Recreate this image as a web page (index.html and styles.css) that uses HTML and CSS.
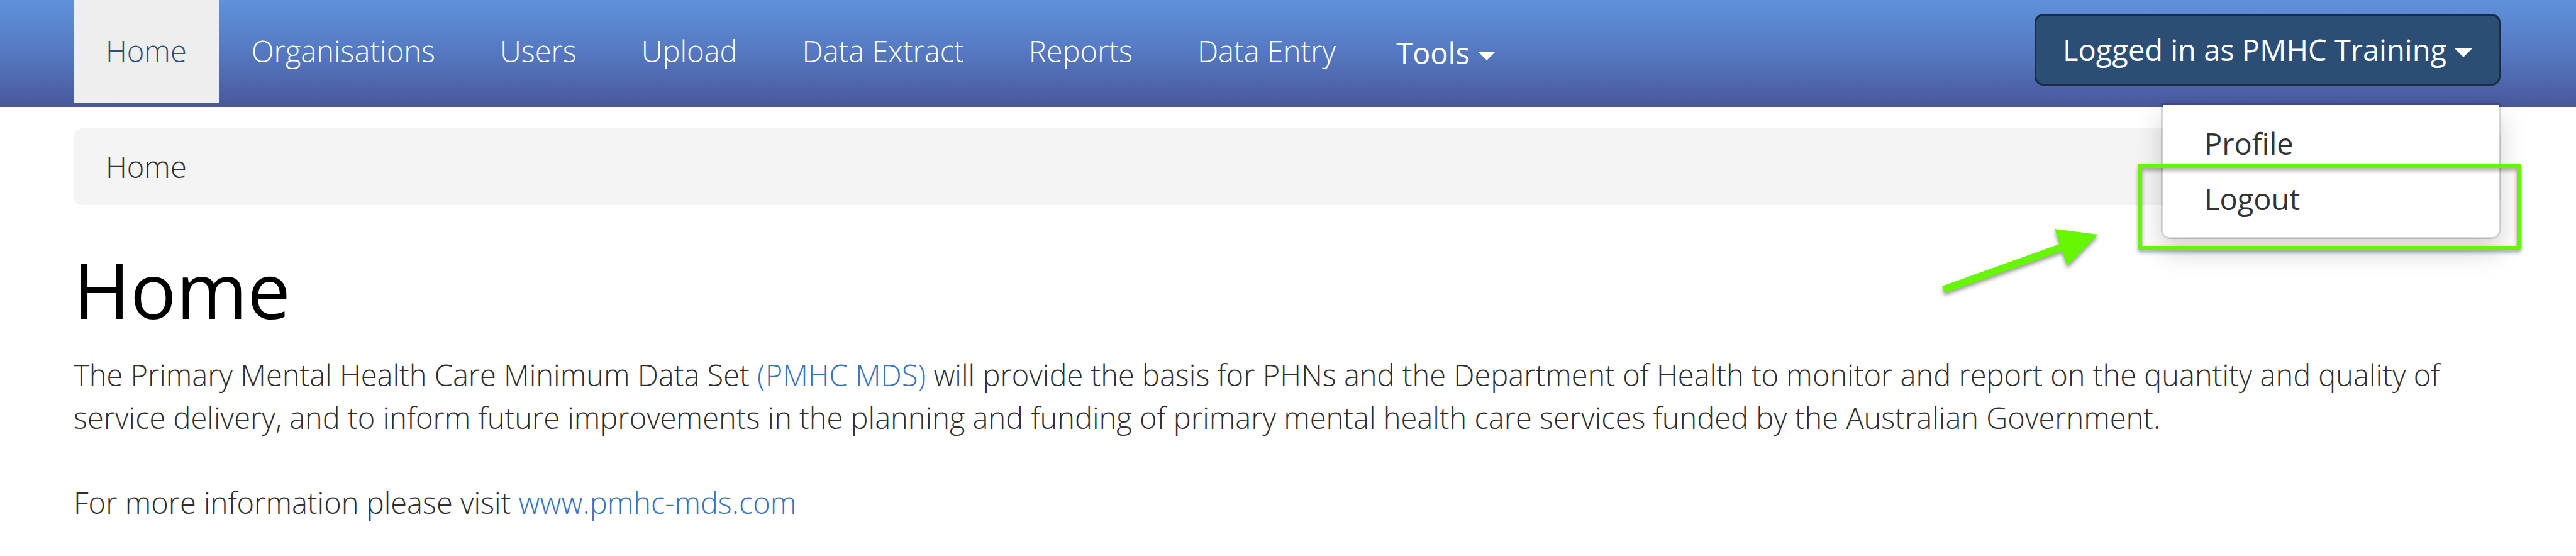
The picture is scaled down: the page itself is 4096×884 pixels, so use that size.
FILE: index.html
```html
<!DOCTYPE html>
<html lang="en">
<head>
<meta charset="utf-8">
<title>Home - PMHC MDS</title>
<link rel="stylesheet" href="styles.css">
</head>
<body>
<header class="navbar">
  <nav class="nav">
    <a class="nav-link active" href="#">Home</a>
    <a class="nav-link" href="#">Organisations</a>
    <a class="nav-link" href="#">Users</a>
    <a class="nav-link" href="#">Upload</a>
    <a class="nav-link" href="#">Data Extract</a>
    <a class="nav-link" href="#">Reports</a>
    <a class="nav-link" href="#">Data Entry</a>
    <button class="tools" type="button">Tools<span class="caret"></span></button>
  </nav>
  <div class="account">
    <button class="account-button" type="button">Logged in as PMHC Training<span class="caret"></span></button>
    <div class="menu">
      <a class="menu-item" href="#">Profile</a>
      <a class="menu-item" href="#">Logout</a>
    </div>
    <div class="highlight"></div>
    <svg class="arrow" width="264" height="124" viewBox="0 0 264 124" aria-hidden="true">
      <path fill="#66f600" d="M8 99 195 32 187 8 256 17 207 67 199 43 12 110Z"/>
    </svg>
  </div>
</header>
<main class="content">
  <ol class="breadcrumb"><li>Home</li></ol>
  <h1 class="title">Home</h1>
  <p class="text">The Primary Mental Health Care Minimum Data Set <a class="link" href="#">(PMHC MDS)</a> will provide the basis for PHNs and the Department of Health to monitor and report on the quantity and quality of service delivery, and to inform future improvements in the planning and funding of primary mental health care services funded by the Australian Government.</p>
  <p class="text">For more information please visit <a class="link" href="#">www.pmhc-mds.com</a></p>
</main>
</body>
</html>
```
FILE: styles.css
```css
* { box-sizing: border-box; }

body {
  margin: 0;
  background: #fff;
  color: #2e2e2e;
  font-family: "Open Sans", "Noto Sans", sans-serif;
  font-size: 47px;
  font-weight: 300;
  line-height: 68px;
}

a { text-decoration: none; }

.navbar {
  display: flex;
  justify-content: space-between;
  align-items: flex-start;
  height: 170px;
  padding: 0 120px 0 117px;
  background: linear-gradient(#6091dc, #5478c0 50%, #4a579c);
}

.nav { display: flex; align-items: flex-start; gap: 1px; }

.nav-link {
  padding: 47px 51px 49px;
  color: #fff;
}

.nav-link.active { background: #eee; color: #2c4f7c; }

button {
  font: inherit;
  color: #fff;
  cursor: pointer;
}

.tools {
  margin: 0;
  padding: 50px 44px 0;
  border: 0;
  background: none;
  font-weight: 500;
}

.caret {
  display: inline-block;
  margin-left: 13px;
  border: 14px solid transparent;
  border-top-color: currentColor;
  border-bottom: 0;
  vertical-align: middle;
}

.account { position: relative; margin-top: 22px; }

.account-button {
  display: block;
  height: 114px;
  padding: 0 42px;
  border: 3px solid #1a2c42;
  border-radius: 14px;
  background: #2c4d74;
  font-weight: 400;
}

.menu {
  position: absolute;
  top: 142px;
  right: 0;
  width: 540px;
  padding: 17px 0;
  border: 3px solid rgba(0, 0, 0, .15);
  border-radius: 0 0 14px 14px;
  background: #fff;
  background-clip: padding-box;
  box-shadow: 0 20px 40px rgba(0, 0, 0, .175);
}

.menu-item {
  display: block;
  padding: 10px 66px;
  color: #333;
  font-weight: 400;
}

.highlight {
  position: absolute;
  top: 239px;
  right: -32px;
  width: 608px;
  height: 136px;
  border: 6px solid #66f600;
  filter: drop-shadow(0 4px 3px rgba(0, 0, 0, .4));
}

.arrow {
  position: absolute;
  top: 334px;
  right: 632px;
  filter: drop-shadow(0 4px 3px rgba(0, 0, 0, .4));
}

.content { padding: 34px 120px 0 117px; }

.breadcrumb {
  margin: 0;
  padding: 27px 51px;
  border-radius: 14px;
  background: #f4f4f4;
  list-style: none;
}

.title {
  margin: 67px 0 35px;
  color: #000;
  font-size: 122px;
  font-weight: 400;
  line-height: 134px;
}

.text { margin: 0 0 67px; }

.link { color: #3a72b9; }
```
